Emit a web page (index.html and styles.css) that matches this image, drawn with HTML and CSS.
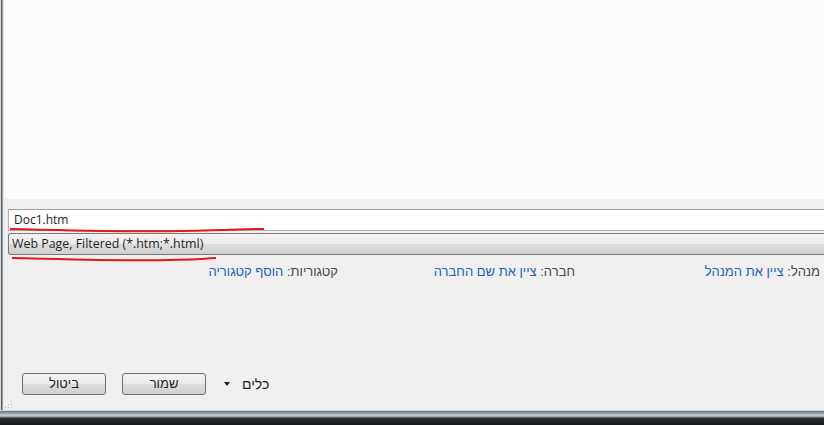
FILE: index.html
```html
<!DOCTYPE html>
<html lang="he">
<head>
<meta charset="utf-8">
<title>Save As</title>
<link rel="stylesheet" href="styles.css">
</head>
<body>
<div class="screen">
  <div class="window">
    <div class="edge"></div>
    <div class="content">
      <div class="preview"></div>
      <div class="fields">
        <div class="filename">Doc1.htm</div>
        <div class="filetype">Web Page, Filtered (*.htm;*.html)</div>
      </div>
      <div class="meta" dir="rtl">
        <div class="meta-col col-manager"><span class="label">מנהל:</span> <span class="link">ציין את המנהל</span></div>
        <div class="meta-col col-company"><span class="label">חברה:</span> <span class="link">ציין את שם החברה</span></div>
        <div class="meta-col col-cat"><span class="label">קטגוריות:</span> <span class="link">הוסף קטגוריה</span></div>
      </div>
      <div class="spacer"></div>
      <div class="actions">
        <div class="btn">ביטול</div>
        <div class="btn">שמור</div>
        <div class="tools"><span class="arrow"></span><span class="tools-label">כלים</span></div>
      </div>
      <div class="gripline">
        <svg class="grip" width="8" height="8" viewBox="0 0 8 8">
          <rect x="6" y="0" width="1" height="1" fill="#b9b9b9"/>
          <rect x="3" y="3" width="1" height="1" fill="#b9b9b9"/>
          <rect x="6" y="3" width="1" height="1" fill="#b9b9b9"/>
          <rect x="0" y="6" width="1" height="1" fill="#b9b9b9"/>
          <rect x="3" y="6" width="1" height="1" fill="#b9b9b9"/>
          <rect x="6" y="6" width="1" height="1" fill="#b9b9b9"/>
        </svg>
      </div>
    </div>
    <svg class="marks" width="824" height="425" viewBox="0 0 824 425">
      <path d="M10 229 C 60 230, 120 232, 180 231 S 240 229, 264 229" stroke="#e0191b" stroke-width="2" fill="none"/>
      <path d="M12 258 C 60 259, 120 261, 170 260 S 205 258, 216 258" stroke="#e0191b" stroke-width="2" fill="none"/>
    </svg>
  </div>
  <div class="taskbar"></div>
</div>
</body>
</html>
```
FILE: styles.css
```css
html, body {
  margin: 0;
  padding: 0;
}
body {
  width: 824px;
  height: 425px;
  overflow: hidden;
  background: #f0f0f0;
  font-family: "Open Sans", "DejaVu Sans", sans-serif;
  font-size: 12px;
  color: #1e1e1e;
}
.screen {
  display: flex;
  flex-direction: column;
  height: 425px;
}
.window {
  position: relative;
  display: flex;
  height: 410px;
}
.edge {
  width: 4px;
  background: linear-gradient(to right, #d4d8dc 0, #d4d8dc 1px, #59616b 1px, #59616b 2px, #9aa1a8 2px, #9aa1a8 3px, #e6e6e6 3px);
}
.content {
  flex: 1;
  display: flex;
  flex-direction: column;
}
.preview {
  height: 199px;
  background: #fcfcfc;
}
.fields {
  padding: 10px 0 0 4px;
  display: flex;
  flex-direction: column;
  gap: 2px;
}
.filename {
  height: 20px;
  line-height: 20px;
  background: #fff;
  border: 1px solid #b4b4b4;
  border-top-color: #a0a0a0;
  border-right: none;
  padding-left: 5px;
}
.filetype {
  height: 20px;
  line-height: 20px;
  font-size: 12.4px;
  border: 1px solid #7a7a7a;
  border-right: none;
  border-radius: 3px 0 0 3px;
  padding-left: 3px;
  background: linear-gradient(to bottom, #f2f2f2 0, #ebebeb 48%, #dcdcdc 52%, #cfcfcf 100%);
}
.meta {
  display: flex;
  margin-top: 8px;
  height: 18px;
  line-height: 18px;
  font-family: "Liberation Sans", "DejaVu Sans", sans-serif;
  font-size: 13px;
}
.meta-col {
  white-space: nowrap;
}
.col-manager {
  width: 249px;
  padding-right: 4px;
  box-sizing: border-box;
}
.col-company {
  width: 237px;
}
.col-cat {
  flex: 1;
}
.label {
  color: #484848;
}
.link {
  color: #1c62b9;
}
.spacer {
  flex: 1;
}
.actions {
  display: flex;
  align-items: center;
  padding-left: 18px;
  height: 24px;
  font-family: "Liberation Sans", "DejaVu Sans", sans-serif;
  font-size: 13px;
}
.btn {
  width: 82px;
  height: 20px;
  line-height: 20px;
  text-align: center;
  border: 1px solid #707070;
  border-radius: 3px;
  background: linear-gradient(to bottom, #f2f2f2 0, #ebebeb 48%, #dddddd 52%, #cfcfcf 100%);
  margin-right: 16px;
}
.tools {
  display: flex;
  align-items: center;
  margin-left: 2px;
}
.arrow {
  width: 0;
  height: 0;
  border-left: 3.5px solid transparent;
  border-right: 3.5px solid transparent;
  border-top: 4px solid #222;
  margin-right: 12px;
}
.tools-label {
  font-size: 14px;
}
.gripline {
  height: 13px;
  display: flex;
  align-items: flex-end;
  padding: 0 0 1px 1px;
}
.marks {
  position: absolute;
  left: 0;
  top: 0;
  pointer-events: none;
}
.taskbar {
  height: 15px;
  background: linear-gradient(to bottom, #c9d0d6 0, #c9d0d6 1px, #6d747b 1px, #8c939a 3px, #c7ccd1 5px, #9aa0a6 7px, #2a2e33 8px, #15171a 15px);
}
```
